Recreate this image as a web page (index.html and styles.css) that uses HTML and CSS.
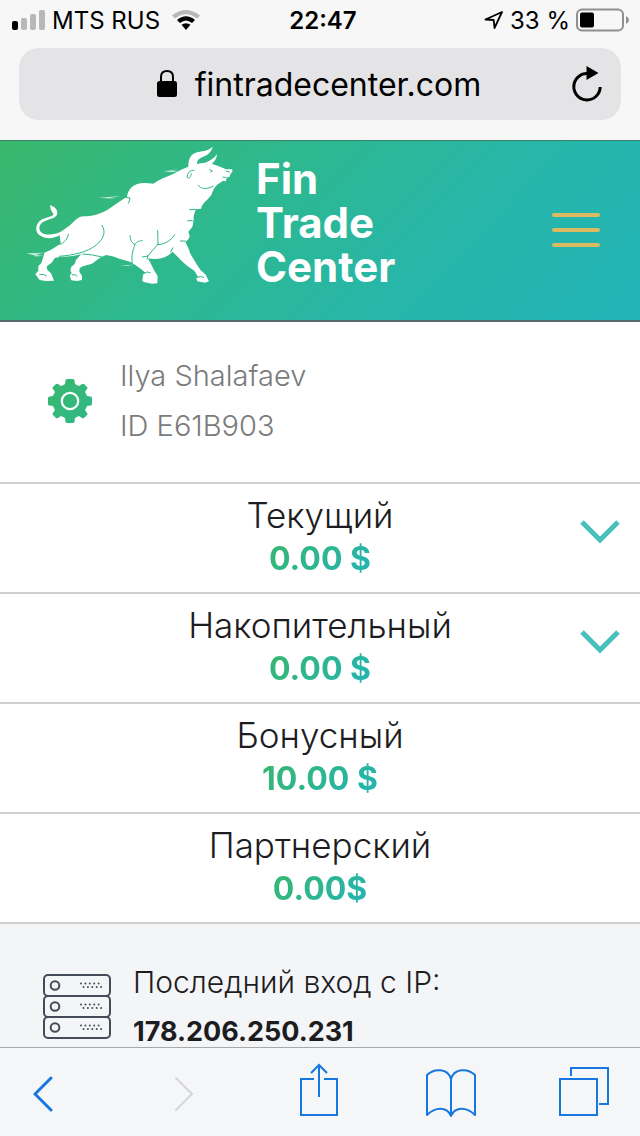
FILE: index.html
```html
<!DOCTYPE html>
<html lang="ru">
<head>
    <meta charset="UTF-8">
    <meta name="viewport" content="width=device-width, initial-scale=1.0">
    <title>Fin Trade Center</title>
    <link rel="stylesheet" href="styles.css">
</head>
<body>

<div class="app">
    <div class="status-bar">
        <div class="status-left">
            <svg width="34" height="22" viewBox="0 0 34 22" aria-hidden="true">
                <rect x="0" y="12" width="6" height="9" rx="2" fill="#000"/>
                <rect x="9" y="9" width="6" height="12" rx="2" fill="#b8b8b9"/>
                <rect x="18" y="5" width="6" height="16" rx="2" fill="#b8b8b9"/>
                <rect x="27" y="1" width="6" height="20" rx="2" fill="#b8b8b9"/>
            </svg>
            <span class="carrier">MTS RUS</span>
            <svg width="28" height="20" viewBox="0 0 28 20" aria-hidden="true">
                <path d="M0 5.500Q14-5.500 28 5.500L25 8.500Q14 0 3 8.500Z" fill="#b8b8b9"/>
                <path d="M5 10Q14 2.500 23 10L20 13Q14 8 8 13ZM9.500 14.800Q14 11.500 18.500 14.800L14 20Z" fill="#000"/>
            </svg>
        </div>
        <span class="time">22:47</span>
        <div class="status-right">
            <svg width="20" height="20" viewBox="0 0 20 20" aria-hidden="true">
                <path d="M1.500 9.500L18 2L10.500 18L9.700 10Z" fill="none" stroke="#000" stroke-width="1.800" stroke-linejoin="round"/>
            </svg>
            <span>33 %</span>
            <svg width="54" height="24" viewBox="0 0 54 24" aria-hidden="true">
                <rect x="1" y="1.500" width="46" height="21" rx="5" fill="none" stroke="#8f8f90" stroke-width="2"/>
                <rect x="4" y="4.500" width="14" height="15" rx="2" fill="#000"/>
                <path d="M50 8Q53 9.500 53 12Q53 14.500 50 16Z" fill="#8f8f90"/>
            </svg>
        </div>
    </div>

    <div class="address-bar">
        <div class="address">
            <svg width="20" height="28" viewBox="0 0 20 28" aria-hidden="true">
                <rect x="0" y="11" width="20" height="16" rx="2.500" fill="#000"/>
                <path d="M4 12V7Q4 1 10 1T16 7V12" fill="none" stroke="#000" stroke-width="2"/>
            </svg>
            <span>fintradecenter.com</span>
        </div>
        <button class="reload" type="button" aria-label="Обновить">
            <svg width="32" height="38" viewBox="0 0 32 38" aria-hidden="true">
                <path d="M16 8.500A13.200 13.200 0 1 0 29.200 22" fill="none" stroke="#000" stroke-width="3"/>
                <path d="M15.500 1L27.500 8L15.500 15Z" fill="#000"/>
            </svg>
        </button>
    </div>

    <main class="page">
        <header class="header">
            <a class="logo" href="#">
                <svg class="bull" width="207" height="140" viewBox="18 21 621 420" aria-hidden="true">
                    <path fill="#fff" d="M578 26C574 43 563 51 548 57C536 62 531 68 531 78C540 75 548 75 553 75C568 70 582 62 591 48C590 62 584 71 575 78C590 81 607 90 619 94L637 94L637 102L631 108L629 116L620 119L618 130L608 129C599 135 592 139 586 146C580 155 577 161 574 171L561 186C551 193 545 204 543 212L528 214C522 228 520 237 521 244L518 264C515 271 510 275 505 281L509 293C508 303 502 307 496 312C502 323 507 333 511 347L531 380L542 397L556 409L567 430L555 434L532 430L529 420L534 416L523 398L501 383L486 370L458 341C448 351 438 357 424 361C411 364 397 364 384 361L393 378L403 398L413 414L412 436L396 437L374 433L367 429L369 410L376 405L366 395L345 380L330 371L300 363C286 358 275 353 258 351L240 359L216 377L188 385L179 391L178 401L186 414L186 426L171 429L154 427L149 413L155 405L151 397L154 386L164 378L168 366L184 348C166 354 148 356 126 356L105 359L95 374L80 385L82 395L94 407L102 428L78 429L59 426L46 409L55 398L55 384L64 375L69 360L73 344L92 336L122 317L119 292C102 302 80 304 63 294C44 284 45 261 60 248C77 236 98 238 101 228C94 220 89 210 91 201C103 206 113 214 112 226C109 243 86 243 69 252C53 262 55 281 71 287C89 293 108 287 121 282C133 274 147 266 163 249C173 240 180 235 192 235C217 236 241 227 262 216L300 190L321 176C323 161 333 145 350 139C367 133 383 136 400 137C418 124 439 117 458 109L482 96L505 86C505 68 509 52 525 45C544 38 564 41 578 26Z"/>
                    <path class="bull-line" d="M246 262C260 285 249 303 229 321C199 344 159 351 118 355M145 289C142 304 135 311 121 319M188 348L218 351L246 357M330 293C331 311 337 315 345 319C339 337 333 351 337 377M345 319C350 309 360 309 367 308M413 278L414 318C404 331 391 343 384 354L367 357M414 320C433 319 451 310 464 290M459 329L452 342M319 178L330 180L326 195M496 309L481 309M517 248L503 248M527 214L509 215M384 354L381 363M371 406Q383 398 391 404M532 418Q542 412 551 418M59 409Q72 408 79 413M157 410Q166 408 171 414"/>
                    <path class="bull-line" d="M522 97C510 95 501 106 502 119C508 124 513 116 514 107M569 95L577 99L573 102M535 142C541 152 548 149 554 152C567 151 573 147 579 145M609 117L618 119M618 99L628 102"/>
                    <path d="M430 100L477 94L455 99L482 99L455 103L474 105ZM236 179L302 174L270 180L294 183ZM19 346L72 344L48 350L70 352L42 355L62 358ZM300 382L344 380L322 383L340 385Z" fill="#fff" opacity=".7"/>
                </svg>
                <span class="logo-text">Fin<br>Trade<br>Center</span>
            </a>
            <button class="menu" type="button" aria-label="Меню">
                <span></span>
                <span></span>
                <span></span>
            </button>
        </header>

        <section class="profile">
            <a class="settings" href="#" aria-label="Настройки">
                <svg width="44" height="44" viewBox="-22 -22 44 44" aria-hidden="true">
                    <defs>
                        <linearGradient id="gear" x1="0" y1="0" x2="1" y2="1">
                            <stop offset="0" stop-color="#38b76d"/>
                            <stop offset="1" stop-color="#30b989"/>
                        </linearGradient>
                    </defs>
                    <g fill="url(#gear)">
                        <path d="M-4.500-20.500Q-4.500-22-3-22H3Q4.500-22 4.500-20.500L5-17Q7.500-15.500 9-15L12-17Q13.300-17.800 14.300-16.800L17-14Q18-13 17-12L15-9Q16.500-6.500 17-5L20.500-4.500Q22-4.500 22-3V3Q22 4.500 20.500 4.500L17 5Q16.500 6.500 15 9L17 12Q18 13 17 14L14.300 16.800Q13.300 17.800 12 17L9 15Q7.500 15.500 5 17L4.500 20.500Q4.500 22 3 22H-3Q-4.500 22-4.500 20.500L-5 17Q-7.500 15.500-9 15L-12 17Q-13.300 17.800-14.300 16.800L-17 14Q-18 13-17 12L-15 9Q-16.500 6.500-17 5L-20.500 4.500Q-22 4.500-22 3V-3Q-22-4.500-20.500-4.500L-17-5Q-16.500-6.500-15-9L-17-12Q-18-13-17-14L-14.300-16.800Q-13.300-17.800-12-17L-9-15Q-7.500-15.500-5-17Z"/>
                    </g>
                    <circle r="8.200" fill="none" stroke="#fff" stroke-width="2.200"/>
                </svg>
            </a>
            <div class="profile-info">
                <div>Ilya Shalafaev</div>
                <div>ID E61B903</div>
            </div>
        </section>

        <section class="account">
            <div class="account-info">
                <div class="account-name">Текущий</div>
                <div class="amount">0.00 $</div>
            </div>
            <button class="expand" type="button" aria-label="Развернуть">
                <svg width="40" height="24" viewBox="0 0 40 24" aria-hidden="true">
                    <path d="M2 2L20 20L38 2" fill="none" stroke="#48c1bd" stroke-width="5"/>
                </svg>
            </button>
        </section>
        <section class="account">
            <div class="account-info">
                <div class="account-name">Накопительный</div>
                <div class="amount">0.00 $</div>
            </div>
            <button class="expand" type="button" aria-label="Развернуть">
                <svg width="40" height="24" viewBox="0 0 40 24" aria-hidden="true">
                    <path d="M2 2L20 20L38 2" fill="none" stroke="#48c1bd" stroke-width="5"/>
                </svg>
            </button>
        </section>
        <section class="account">
            <div class="account-info">
                <div class="account-name">Бонусный</div>
                <div class="amount">10.00 $</div>
            </div>
        </section>
        <section class="account">
            <div class="account-info">
                <div class="account-name">Партнерский</div>
                <div class="amount">0.00$</div>
            </div>
        </section>

        <section class="last-login">
            <svg width="68" height="66" viewBox="0 0 68 66" aria-hidden="true">
                <defs>
                    <g id="server" fill="none" stroke="#454b58">
                        <rect x="1" y="1" width="66" height="21" rx="4" stroke-width="2"/>
                        <circle cx="12" cy="11.500" r="4.300" stroke-width="2"/>
                        <path d="M38 9.500H60M40.500 13H62" stroke-width="2" stroke-linecap="round" stroke-dasharray="0 4.400"/>
                    </g>
                </defs>
                <use href="#server"/>
                <use href="#server" y="21"/>
                <use href="#server" y="42"/>
            </svg>
            <div class="login-info">
                <div>Последний вход с IP:</div>
                <strong>178.206.250.231</strong>
            </div>
        </section>
    </main>

    <nav class="toolbar">
        <button class="back" type="button" aria-label="Назад">
            <svg width="20" height="41" viewBox="0 0 20 41"><path d="M18 2L2 18L18 34" stroke-width="3" stroke-linecap="round"/></svg>
        </button>
        <button class="forward" type="button" aria-label="Вперёд" disabled>
            <svg width="20" height="41" viewBox="0 0 20 41"><path d="M2 2L18 18L2 34" stroke-width="2" stroke-linecap="round"/></svg>
        </button>
        <button type="button" aria-label="Поделиться">
            <svg width="38" height="54" viewBox="0 0 38 54"><path d="M14 16H1V52H37V16H24M19 34V2M11 10L19 2L27 10" stroke-width="2"/></svg>
        </button>
        <button type="button" aria-label="Закладки">
            <svg width="50" height="50" viewBox="0 0 50 50"><path d="M25 12C22 1 8 1 1 8V48C9 40 21 39 25 49C29 39 41 40 49 48V8C42 1 28 1 25 12ZM25 12V49" stroke-width="2" stroke-linejoin="round"/></svg>
        </button>
        <button type="button" aria-label="Вкладки">
            <svg width="50" height="50" viewBox="0 0 50 50"><path d="M1 12H38V48H1ZM12 9V1H49V37H40" stroke-width="2"/></svg>
        </button>
    </nav>
</div>

</body>
</html>
```
FILE: styles.css
```css
* {
    box-sizing: border-box;
}
body {
    margin: 0;
    font-family: Inter, "Liberation Sans", sans-serif;
    color: #1d1d1f;
    background-color: #f7f7f8;
}
button {
    padding: 0;
    background: none;
    border: none;
    cursor: pointer;
}
svg {
    display: block;
    flex-shrink: 0;
}
.app {
    display: flex;
    flex-direction: column;
    height: 100vh;
}

/* browser bars */
.status-bar {
    display: grid;
    grid-template-columns: 1fr auto 1fr;
    align-items: center;
    height: 40px;
    padding: 0 10px 0 12px;
    font-size: 24px;
    color: #000;
}
.status-left,
.status-right {
    display: flex;
    align-items: center;
    gap: 6px;
}
.carrier {
    margin-right: 6px;
}
.status-right {
    justify-content: flex-end;
}
.time {
    padding-left: 4px;
    font-weight: 600;
}
.address-bar {
    display: flex;
    align-items: center;
    margin: 8px 19px 20px;
    height: 72px;
    padding: 0 18px 0 48px;
    border-radius: 20px;
    background-color: #e4e4e7;
    color: #000;
}
.address {
    display: flex;
    flex: 1;
    align-items: center;
    justify-content: center;
    gap: 18px;
    font-size: 32px;
}
.page {
    flex: 1;
    min-height: 0;
    overflow-y: auto;
    scrollbar-width: none;
    background-color: #fff;
}

/* header */
.header {
    display: flex;
    align-items: center;
    justify-content: space-between;
    padding: 4px 40px 31px 26px;
    border-top: 1px solid #3b7f68;
    border-bottom: 2px solid #5a6b70;
    background: linear-gradient(135deg, #39b76c, #2cb893 42%, #28b6a8 65%, #21b4b8);
}
.logo {
    display: flex;
    gap: 23px;
    color: #fff;
    text-decoration: none;
}
.logo-text {
    padding-top: 12px;
    font-size: 42px;
    font-weight: 700;
    line-height: 44px;
}
.bull-line {
    fill: none;
    stroke: #30b58c;
    stroke-width: 3;
    stroke-linecap: round;
}
.menu {
    display: flex;
    flex-direction: column;
    gap: 11px;
    padding-top: 26px;
}
.menu span {
    width: 48px;
    height: 4px;
    border-radius: 2px;
    background-color: #dcba62;
}

/* profile */
.profile {
    display: flex;
    align-items: center;
    gap: 28px;
    padding: 29px 48px 31px;
    border-bottom: 2px solid #cfcfd1;
    font-size: 29px;
    font-weight: 300;
    line-height: 50px;
    color: #7b7b7b;
}

/* accounts */
.account {
    display: grid;
    grid-template-columns: 80px 1fr 80px;
    padding: 9px 0 11px;
    border-bottom: 2px solid #cfcfd1;
    text-align: center;
    line-height: 44px;
}
.account-info {
    grid-column: 2;
}
.account-name {
    font-size: 35px;
    font-weight: 300;
}
.amount {
    width: fit-content;
    margin: 0 auto;
    font-size: 32px;
    font-weight: 700;
    background: linear-gradient(135deg, #39b76c, #21b4b8);
    -webkit-background-clip: text;
    background-clip: text;
    color: transparent;
}
.expand {
    display: flex;
    align-items: center;
    justify-content: center;
    height: 78px;
}

/* last login */
.last-login {
    display: flex;
    align-items: center;
    gap: 22px;
    padding: 33px 43px;
    background-color: #f4f5f7;
    font-size: 30px;
    font-weight: 300;
    line-height: 50px;
}
.last-login strong {
    display: block;
    font-size: 27px;
    font-weight: 700;
}

/* bottom toolbar */
.toolbar {
    display: flex;
    align-items: flex-end;
    justify-content: space-between;
    padding: 15px 30px 19px 11px;
    border-top: 1px solid #a8a9ab;
    background-color: #f5f6f7;
}
.toolbar button {
    display: flex;
    justify-content: center;
    width: 52px;
}
.toolbar .back {
    width: 64px;
}
.toolbar .forward {
    width: 56px;
}
.toolbar svg {
    fill: none;
    stroke: #1777e0;
}
.toolbar button:disabled svg {
    stroke: #d5d6d8;
}
```
